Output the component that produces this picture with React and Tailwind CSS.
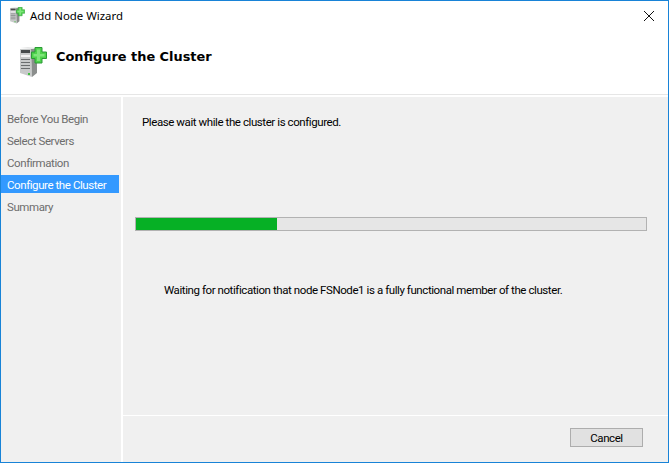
const ServerIcon = ({ width, height }) => (
    <svg width={width} height={height} viewBox="0 0 27 31">
        <path d="M0 2 L11 2 L12 30 L0 26 Z" fill="#c8caca" />
        <path d="M11 2 L17 1 L17 26 L12 30 Z" fill="#8b8e8d" />
        <path d="M0 1 L8 0 L17 1 L11 2 Z" fill="#e6e7e7" />
        <path d="M1 3 H10 V6 H1 Z" fill="#474b4c" />
        <path d="M1 8 H10 V10 H1 Z" fill="#f4f4f4" />
        <path d="M1 12.5 H10 M1 15.5 H10 M1 18.5 H10 M1 21.5 H10" stroke="#6a6d6e" strokeWidth="1" />
        <path d="M8 26 H10 V28 H8 Z" fill="#3fbf3f" />
        <path d="M15 0.5 H22 V5 H26.5 V11.5 H22 V16 H15 V11.5 H11.5 V5 H15 Z" fill="#4fd24c" stroke="#2b9a36" strokeWidth="1" />
        <path d="M17 2.5 H20 V7 H24.5 V9.5 H20 V14 H17 V9.5 H13.5 V7 H17 Z" fill="#7fe57b" />
    </svg>
);

const steps = ['Before You Begin', 'Select Servers', 'Confirmation', 'Configure the Cluster', 'Summary'];

export default function App() {
    return (
        <div className="w-[669px] h-[463px] flex flex-col bg-white border border-[#1883d7] overflow-hidden text-[11.5px] tracking-[-0.42px] text-black font-['Roboto',sans-serif]">
            <div className="h-[30px] shrink-0 flex items-center justify-between">
                <div className="flex items-center pl-[9px]">
                    <ServerIcon width={15} height={17} />
                    <span className="ml-[5px] text-[11.4px] tracking-normal font-['Noto_Sans',sans-serif]">Add Node Wizard</span>
                </div>
                <svg width="10" height="10" viewBox="0 0 10 10" className="mr-[14px]">
                    <path d="M0 0 L10 10 M10 0 L0 10" stroke="#111" strokeWidth="1" />
                </svg>
            </div>
            <div className="h-[64px] shrink-0 flex items-start pt-[16px] pl-[19px] border-b border-[#e6e6e6]">
                <ServerIcon width={27} height={31} />
                <span className="ml-[9px] text-[12.9px] tracking-normal font-bold font-['DejaVu_Sans',sans-serif]">Configure the Cluster</span>
            </div>
            <div className="flex-1 flex gap-[2px] pt-[2px]">
                <div className="w-[120px] shrink-0 bg-[#f0f0f0] pt-[12px] text-[#6d6d6d]">
                    {steps.map((s) => (
                        <div
                            key={s}
                            className={s === 'Configure the Cluster'
                                ? 'h-[18px] mb-[4px] mr-[2px] flex items-center pt-[3px] pl-[6px] bg-[#3399ff] text-white whitespace-nowrap'
                                : 'h-[18px] mb-[4px] flex items-center pt-[3px] pl-[6px] whitespace-nowrap'}
                        >
                            {s}
                        </div>
                    ))}
                </div>
                <div className="flex-1 flex flex-col bg-[#f0f0f0]">
                    <div className="h-[318px] shrink-0 pl-[12px] pr-[21px] pt-[18px]">
                        <div className="h-[16px] pl-[7px] flex items-center">Please wait while the cluster is configured.</div>
                        <div className="mt-[86px] h-[14px] border border-[#b2b2b2] bg-[#e6e6e6]">
                            <div className="w-[141px] h-full bg-[#06b025]" />
                        </div>
                        <div className="mt-[52px] h-[16px] pl-[29px] flex items-center">Waiting for notification that node FSNode1 is a fully functional member of the cluster.</div>
                    </div>
                    <div className="flex-1 border-t border-white flex justify-end pt-[12px] pr-[25px]">
                        <button className="w-[73px] h-[19px] pt-[2px] bg-[#e1e1e1] border border-[#adadad] flex items-center justify-center">Cancel</button>
                    </div>
                </div>
            </div>
        </div>
    );
}
